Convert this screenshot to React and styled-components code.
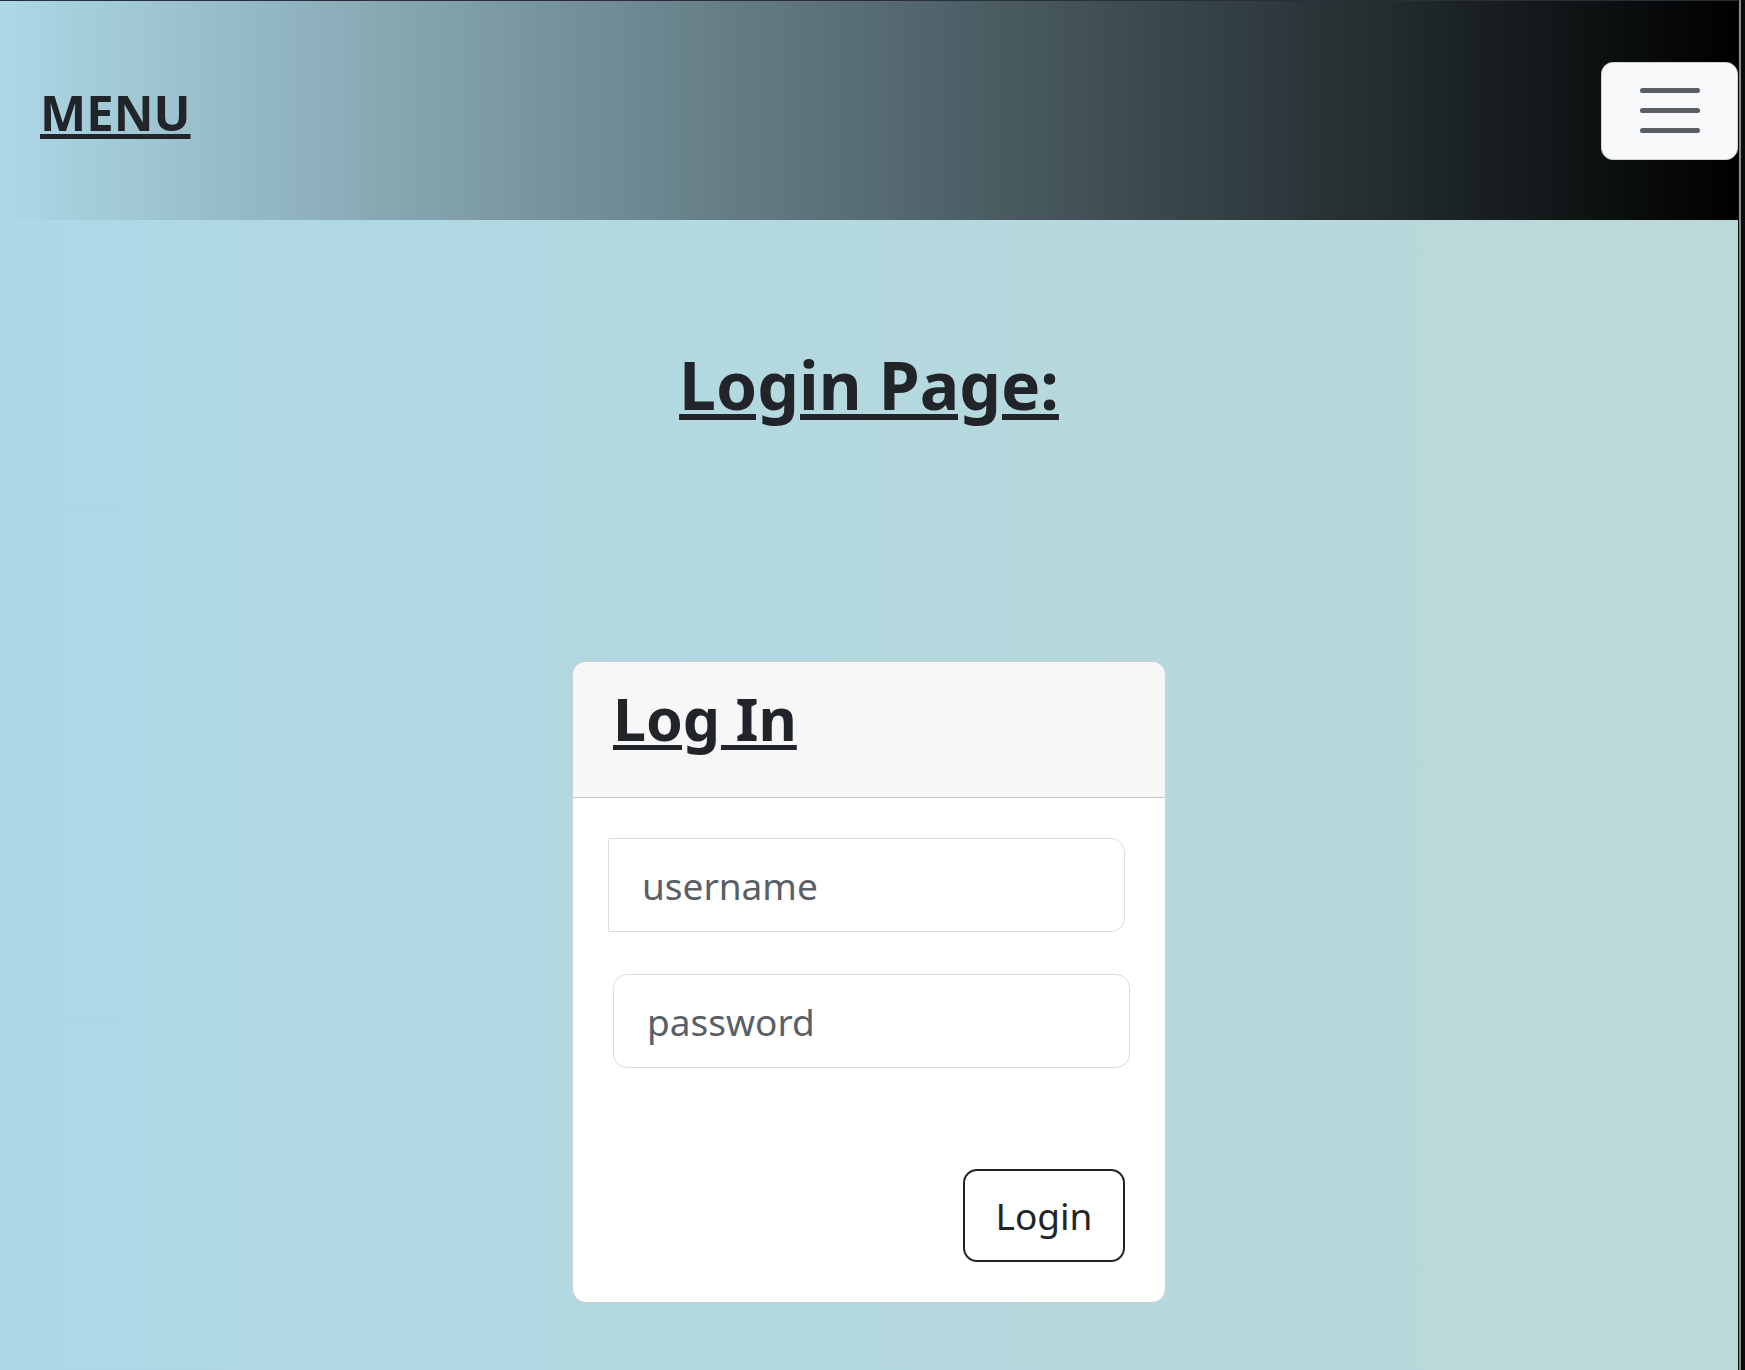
import React from 'react';
import styled, { createGlobalStyle } from 'styled-components';

const GlobalStyle = createGlobalStyle`
  * {
    box-sizing: border-box;
  }

  body {
    margin: 0;
    background: #0b0b0b;
    font-family: "Noto Sans", "Open Sans", sans-serif;
    color: #212529;
  }
`;

const Shell = styled.div`
  display: flex;
  min-height: 1370px;
`;

const Page = styled.div`
  flex: 0 0 1738px;
  display: flex;
  flex-direction: column;
  background: linear-gradient(to right, #add8e6, #bbd9d8);
`;

const Edge = styled.div`
  flex: 0 0 7px;
  background: linear-gradient(to right, #0b0b0b 0 1px, #8a8a8a 1px 3px, #0b0b0b 3px);
`;

const Navbar = styled.nav`
  height: 220px;
  display: flex;
  align-items: center;
  justify-content: space-between;
  padding: 4px 0 0 40px;
  border-top: 1px solid #2a2e3a;
  background: linear-gradient(to right, #add8e6, #000);
`;

const Brand = styled.a`
  font-size: 49px;
  font-weight: 700;
  line-height: 1.2;
  color: #212529;
  text-decoration: underline;
  text-decoration-thickness: 5px;
  text-underline-offset: 3px;
`;

const Toggler = styled.button`
  width: 137px;
  height: 98px;
  margin-top: -4px;
  display: flex;
  flex-direction: column;
  align-items: center;
  justify-content: center;
  gap: 15px;
  background: #f8f9fa;
  border: 1px solid #d0d2d4;
  border-radius: 12px;
  padding: 0;
`;

const Bar = styled.span`
  display: block;
  width: 60px;
  height: 5px;
  border-radius: 3px;
  background: #5a5d61;
`;

const Main = styled.main`
  display: flex;
  flex-direction: column;
  align-items: center;
`;

const Title = styled.h1`
  margin: 125px 0 0;
  font-size: 66px;
  font-weight: 700;
  line-height: 1.2;
  text-decoration: underline;
  text-decoration-thickness: 6px;
  text-underline-offset: 4px;
`;

const Card = styled.div`
  width: 594px;
  margin-top: 237px;
  background: #fff;
  border: 1px solid #cbcdce;
  border-radius: 14px;
  overflow: hidden;
`;

const CardHeader = styled.div`
  height: 136px;
  padding: 21px 40px 0;
  background: #f7f7f7;
  border-bottom: 1px solid #c8c8c8;
`;

const CardTitle = styled.h2`
  margin: 0;
  font-size: 59px;
  font-weight: 700;
  line-height: 1.2;
  text-decoration: underline;
  text-decoration-thickness: 5px;
  text-underline-offset: 4px;
`;

const CardBody = styled.form`
  display: flex;
  flex-direction: column;
  padding: 40px 40px 40px;
`;

const Field = styled.input`
  height: 94px;
  margin: ${p => (p.$shift === 'left' ? '0 0 0 -5px' : '42px -5px 0 0')};
  padding: 0 33px;
  font-family: inherit;
  font-size: 37px;
  color: #212529;
  background: #fff;
  border: 1.5px solid #d9dcdf;
  border-radius: ${p => (p.$shift === 'left' ? '0 14px 14px 0' : '14px')};
  outline: none;

  &::placeholder {
    color: #595f66;
  }
`;

const Actions = styled.div`
  display: flex;
  justify-content: flex-end;
  margin-top: 101px;
`;

const Button = styled.button`
  width: 162px;
  height: 93px;
  font-family: inherit;
  font-size: 37px;
  color: #212529;
  background: transparent;
  border: 2px solid #212529;
  border-radius: 14px;
`;

export default function App() {
  return (
    <>
      <GlobalStyle />
      <Shell>
        <Page>
          <Navbar>
            <Brand href="#">MENU</Brand>
            <Toggler type="button" aria-label="Toggle navigation">
              <Bar />
              <Bar />
              <Bar />
            </Toggler>
          </Navbar>
          <Main>
            <Title>Login Page:</Title>
            <Card>
              <CardHeader>
                <CardTitle>Log In</CardTitle>
              </CardHeader>
              <CardBody onSubmit={e => e.preventDefault()}>
                <Field $shift="left" type="text" placeholder="username" />
                <Field $shift="right" type="password" placeholder="password" />
                <Actions>
                  <Button type="submit">Login</Button>
                </Actions>
              </CardBody>
            </Card>
          </Main>
        </Page>
        <Edge />
      </Shell>
    </>
  );
}
